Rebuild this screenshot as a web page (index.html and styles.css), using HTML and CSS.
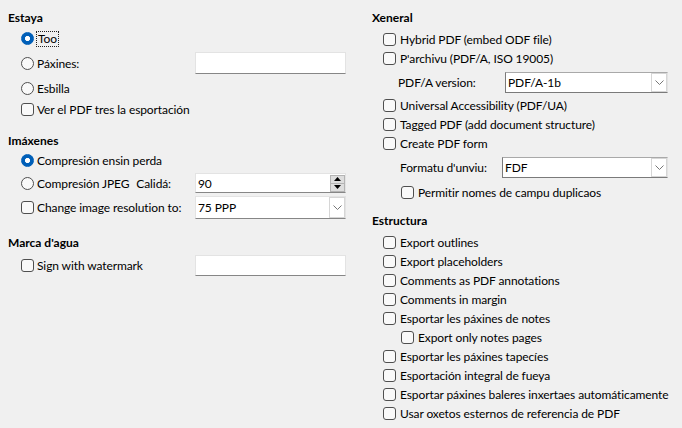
FILE: index.html
```html
<!DOCTYPE html>
<html lang="ast">
<head>
<meta charset="utf-8">
<title>PDF options</title>
<link rel="stylesheet" href="styles.css">
</head>
<body>
<div class="dialog">
  <div class="col col-left">
    <div class="head h19">Estaya</div>
    <div class="row h23"><span class="radio on"></span><span class="lbl focus">Too</span></div>
    <div class="row h26"><span class="radio"></span><span class="lbl">Páxines:</span><span class="field w151 h22"></span></div>
    <div class="row h25"><span class="radio"></span><span class="lbl">Esbilla</span></div>
    <div class="row h17"><span class="check"></span><span class="lbl">Ver el PDF tres la esportación</span></div>

    <div class="head h18 mt13">Imáxenes</div>
    <div class="row h23"><span class="radio on"></span><span class="lbl">Compresión ensin perda</span></div>
    <div class="row h22"><span class="radio"></span><span class="lbl">Compresión JPEG</span><span class="lbl sub">Calidá:</span>
      <span class="field w151 h20 spin"><span class="val">90</span>
        <span class="spinbtns"><span class="sb up"><svg width="7" height="4" viewBox="0 0 7 4"><path d="M0 4 L3.5 0 L7 4 Z" fill="#000"/></svg></span><span class="sb down"><svg width="7" height="4" viewBox="0 0 7 4"><path d="M0 0 L3.5 4 L7 0 Z" fill="#000"/></svg></span></span>
      </span>
    </div>
    <div class="row h27"><span class="check"></span><span class="lbl">Change image resolution to:</span>
      <span class="field w151 h23 combo"><span class="val">75 PPP</span><span class="drop"><svg width="9" height="5" viewBox="0 0 9 5"><path d="M0.5 0.5 L4.5 4.5 L8.5 0.5" fill="none" stroke="#777" stroke-width="1"/></svg></span></span>
    </div>

    <div class="head h18 mt12">Marca d'agua</div>
    <div class="row h22 mt3"><span class="check"></span><span class="lbl">Sign with watermark</span><span class="field w151 h21"></span></div>
  </div>

  <div class="col col-right">
    <div class="head h19">Xeneral</div>
    <div class="row h19 mt3"><span class="check"></span><span class="lbl">Hybrid PDF (embed ODF file)</span></div>
    <div class="row h19"><span class="check"></span><span class="lbl">P'archivu (PDF/A, ISO 19005)</span></div>
    <div class="row h27 mt1 ind"><span class="lbl plain">PDF/A version:</span>
      <span class="field w163 h21 combo dark"><span class="val">PDF/A-1b</span><span class="drop"><svg width="9" height="5" viewBox="0 0 9 5"><path d="M0.5 0.5 L4.5 4.5 L8.5 0.5" fill="none" stroke="#777" stroke-width="1"/></svg></span></span>
    </div>
    <div class="row h19"><span class="check"></span><span class="lbl">Universal Accessibility (PDF/UA)</span></div>
    <div class="row h19"><span class="check"></span><span class="lbl">Tagged PDF (add document structure)</span></div>
    <div class="row h19"><span class="check"></span><span class="lbl">Create PDF form</span></div>
    <div class="row h28 ind2"><span class="lbl plain">Formatu d'unviu:</span>
      <span class="field w166 h21 combo dark"><span class="val">FDF</span><span class="drop"><svg width="9" height="5" viewBox="0 0 9 5"><path d="M0.5 0.5 L4.5 4.5 L8.5 0.5" fill="none" stroke="#777" stroke-width="1"/></svg></span></span>
    </div>
    <div class="row h18 mt2 sub2"><span class="check"></span><span class="lbl">Permitir nomes de campu duplicaos</span></div>

    <div class="head h18 mt10">Estructura</div>
    <div class="list">
      <div class="row h19"><span class="check"></span><span class="lbl">Export outlines</span></div>
      <div class="row h19"><span class="check"></span><span class="lbl">Export placeholders</span></div>
      <div class="row h19"><span class="check"></span><span class="lbl">Comments as PDF annotations</span></div>
      <div class="row h19"><span class="check"></span><span class="lbl">Comments in margin</span></div>
      <div class="row h19"><span class="check"></span><span class="lbl">Esportar les páxines de notes</span></div>
      <div class="row h19 sub2"><span class="check"></span><span class="lbl">Export only notes pages</span></div>
      <div class="row h19"><span class="check"></span><span class="lbl">Esportar les páxines tapecíes</span></div>
      <div class="row h19"><span class="check"></span><span class="lbl">Esportación integral de fueya</span></div>
      <div class="row h19"><span class="check"></span><span class="lbl">Esportar páxines baleres inxertaes automáticamente</span></div>
      <div class="row h19"><span class="check"></span><span class="lbl">Usar oxetos esternos de referencia de PDF</span></div>
    </div>
  </div>
</div>
</body>
</html>
```
FILE: styles.css
```css
html, body {
  margin: 0;
  padding: 0;
  background: #f0f0f0;
}
body {
  font-family: "Lato", "Noto Sans", sans-serif;
  font-size: 12px;
  letter-spacing: -0.1px;
  color: #000;
  width: 682px;
  height: 428px;
  overflow: hidden;
}
.dialog {
  display: flex;
  padding: 8px 0 0 8px;
  gap: 26px;
}
.col {
  display: flex;
  flex-direction: column;
}
.col-left { width: 338px; }
.col-right { width: 296px; }

.head {
  font-weight: bold;
  letter-spacing: 0;
  display: flex;
  align-items: center;
}
.row {
  display: flex;
  align-items: center;
  padding-left: 13px;
}
.col-right .row { padding-left: 11px; }
.col-right .row.sub2 { padding-left: 29px; }
.col-right .row.ind { padding-left: 26px; }
.col-right .row.ind2 { padding-left: 28px; }

.h17 { height: 17px; }
.h18 { height: 18px; }
.h19 { height: 19px; }
.h22 { height: 22px; }
.h23 { height: 23px; }
.h25 { height: 25px; }
.h26 { height: 26px; }
.h27 { height: 27px; }
.h28 { height: 28px; }
.mt1 { margin-top: 1px; }
.mt2 { margin-top: 2px; }
.mt3 { margin-top: 3px; }
.mt4 { margin-top: 4px; }
.mt10 { margin-top: 10px; }
.mt12 { margin-top: 12px; }
.mt13 { margin-top: 13px; }
.list { margin-top: 4px; display: flex; flex-direction: column; }

.check, .radio {
  width: 13px;
  height: 13px;
  box-sizing: border-box;
  border: 1px solid #4f4f4f;
  background: #f9f9f9;
  flex: none;
}
.check { border-radius: 3px; }
.radio { border-radius: 50%; }
.radio.on {
  border-color: #005fb8;
  background: radial-gradient(circle, #ffffff 0 2.2px, #005fb8 2.9px);
}
.lbl {
  margin-left: 3px;
  white-space: nowrap;
}
.col-right .lbl { margin-left: 4px; }
.lbl.plain { margin-left: 0; }
.lbl.sub { margin-left: 7px; }
.lbl.focus {
  border: 1px dotted #222;
  padding: 0 1px;
  margin-left: 2px;
  line-height: 14px;
}

.field {
  margin-left: auto;
  background: #fff;
  box-sizing: border-box;
  border: 1px solid #e3e3e3;
  border-bottom: 1px solid #868686;
  display: flex;
  align-items: center;
  position: relative;
}
.w151 { width: 151px; }
.w163 { width: 163px; }
.w166 { width: 166px; }
.field.h20 { height: 20px; }
.field.h21 { height: 21px; }
.field.h22 { height: 22px; }
.field.h23 { height: 23px; }
.field .val {
  padding-left: 2px;
  flex: 1;
}
.field.dark {
  border-color: #a9a9a9 #e3e3e3 #7a7a7a #7a7a7a;
}
.drop {
  width: 16px;
  align-self: stretch;
  box-sizing: border-box;
  border: 1px solid #d6d6d6;
  display: flex;
  align-items: center;
  justify-content: center;
  background: #fff;
}
.spinbtns {
  display: flex;
  flex-direction: column;
  width: 15px;
  height: 17px;
}
.sb {
  flex: 1;
  box-sizing: border-box;
  background: #dedede;
  border: 1px solid #b4b4b4;
  display: flex;
  align-items: center;
  justify-content: center;
}
.sb.down { border-top: none; }
```
